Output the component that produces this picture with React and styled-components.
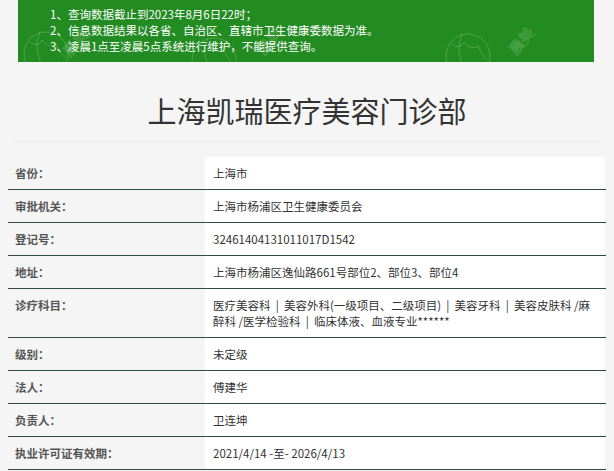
import React from 'react';
import styled, { createGlobalStyle } from 'styled-components';

const GlobalStyle = createGlobalStyle`
    html, body {
        margin: 0;
        padding: 0;
        background: #f5f5f5;
    }
    body {
        font-family: "Noto Sans CJK SC", "Noto Sans", sans-serif;
    }
`;

const SEP = '\u00a0 | \u00a0';

const rows = [
    { label: '省份：', value: '上海市' },
    { label: '审批机关：', value: '上海市杨浦区卫生健康委员会' },
    { label: '登记号：', value: '32461404131011017D1542' },
    { label: '地址：', value: '上海市杨浦区逸仙路661号部位2、部位3、部位4' },
    {
        label: '诊疗科目：',
        value: `医疗美容科${SEP}美容外科(一级项目、二级项目)${SEP}美容牙科${SEP}美容皮肤科 /麻醉科 /医学检验科${SEP}临床体液、血液专业******`,
    },
    { label: '级别：', value: '未定级' },
    { label: '法人：', value: '傅建华' },
    { label: '负责人：', value: '卫连坤' },
    { label: '执业许可证有效期：', value: '2021/4/14 -至- 2026/4/13' },
];

const marks = [
    { cx: 28, cy: 54, tx: 52, ty: 58 },
    { cx: 196, cy: 60, tx: 246, ty: 56 },
    { cx: 450, cy: 56, tx: 498, ty: 56 },
];

const Watermark = () => (
    <MarkLayer width="575" height="62" viewBox="0 0 575 62">
        {marks.map((m, i) => (
            <g key={i} fill="none" stroke="rgba(210,245,190,0.3)" strokeWidth="0.8">
                <circle cx={m.cx} cy={m.cy} r="22" />
                <path d={`M${m.cx - 17} ${m.cy - 12} q9 6 13 -2 q6 9 14 4 q4 10 9 14`} />
                <path d={`M${m.cx - 6} ${m.cy - 22} q-8 18 4 36`} />
                <text
                    x={m.tx}
                    y={m.ty}
                    fontSize="15"
                    strokeWidth="0.5"
                    transform={`rotate(-50 ${m.tx} ${m.ty})`}
                    fontFamily="Noto Sans CJK SC, sans-serif"
                >
                    晨美
                </text>
            </g>
        ))}
    </MarkLayer>
);

const App = () => {
    return (
        <Page>
            <GlobalStyle />
            <Banner>
                <Watermark />
                <Notice>
                    <li>1、查询数据截止到2023年8月6日22时；</li>
                    <li>2、信息数据结果以各省、自治区、直辖市卫生健康委数据为准。</li>
                    <li>3、凌晨1点至凌晨5点系统进行维护，不能提供查询。</li>
                </Notice>
            </Banner>

            <Title>上海凯瑞医疗美容门诊部</Title>

            <Table>
                {rows.map((r, i) => (
                    <Row key={i}>
                        <Label>{r.label}</Label>
                        <Value>{r.value}</Value>
                    </Row>
                ))}
            </Table>
        </Page>
    );
};

export default App;

const Page = styled.div`
    width: 598px;
    margin-left: 8px;
`;

const Banner = styled.div`
    position: relative;
    overflow: hidden;
    height: 62px;
    margin: 0 12px 0 10px;
    background: #228b22;
    box-sizing: border-box;
    padding-top: 6px;
`;

const MarkLayer = styled.svg`
    position: absolute;
    left: 0;
    top: 0;
`;

const Notice = styled.ul`
    position: relative;
    margin: 0;
    padding: 0 0 0 32px;
    list-style: none;

    li {
        color: #ffffff;
        font-size: 11.5px;
        line-height: 16px;
        height: 16px;
    }
`;

const Title = styled.h1`
    margin: 0 6px;
    height: 80px;
    padding-top: 16px;
    box-sizing: border-box;
    display: flex;
    align-items: center;
    justify-content: center;

    color: #333333;
    font-size: 29px;
    font-weight: 400;
    border-bottom: 1px solid #ebebeb;
`;

const Table = styled.div`
    margin-top: 15px;
    display: flex;
    flex-direction: column;
`;

const Row = styled.div`
    display: grid;
    grid-template-columns: 197px 400px;
    border-bottom: 1px solid #2f4d3d;
`;

const Label = styled.div`
    padding: 8px 7px;
    line-height: 16px;
    background: #f5f5f5;
    color: #555555;
    font-size: 11.5px;
    font-weight: 700;
`;

const Value = styled.div`
    padding: 8px;
    line-height: 16px;
    background: #ffffff;
    color: #333333;
    font-size: 11.5px;
`;
